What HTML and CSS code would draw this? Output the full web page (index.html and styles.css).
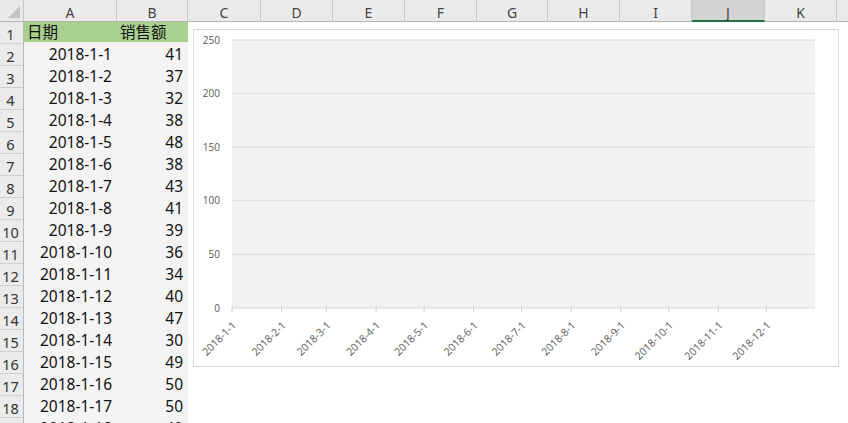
FILE: index.html
```html
<!DOCTYPE html>
<html lang="zh-CN">
<head>
    <meta charset="UTF-8">
    <title>销售额 - Sheet1</title>
    <link rel="stylesheet" href="styles.css">
</head>
<body>
    <div class="page">
        <div class="sheet" id="sheet">
            <div class="corner"><span class="corner-mark"></span></div>
            <div class="col-head">A</div>
            <div class="col-head">B</div>
            <div class="col-head">C</div>
            <div class="col-head">D</div>
            <div class="col-head">E</div>
            <div class="col-head">F</div>
            <div class="col-head">G</div>
            <div class="col-head">H</div>
            <div class="col-head">I</div>
            <div class="col-head active">J</div>
            <div class="col-head">K</div>
            <div class="col-head"></div>

            <div class="row-head">1</div>
            <div class="cell title">日期</div>
            <div class="cell title">销售额</div>
            <div class="cell rest"></div>
        </div>

        <!-- floating chart object -->
        <div class="chart">
            <svg id="chartSvg" width="646" height="338" viewBox="0 0 646 338"></svg>
        </div>
    </div>

    <script>
        const sales = [41, 37, 32, 38, 48, 38, 43, 41, 39, 36, 34, 40, 47, 30, 49, 50, 50, 40];
        const sheet = document.getElementById('sheet');

        sales.forEach((val, i) => {
            sheet.insertAdjacentHTML('beforeend', `
                <div class="row-head">${i + 2}</div>
                <div class="cell date">2018-1-${i + 1}</div>
                <div class="cell num">${val}</div>
                <div class="cell rest"></div>
            `);
        });

        // chart: plot area inside the chart box
        const svg = document.getElementById('chartSvg');
        const plot = { x: 39, y: 11, w: 583, h: 268 };
        let out = `<rect class="plot-bg" x="${plot.x}" y="${plot.y}" width="${plot.w}" height="${plot.h}"/>`;

        [250, 200, 150, 100, 50, 0].forEach(v => {
            const y = plot.y + plot.h - v / 250 * plot.h;
            out += `<line class="grid" x1="${plot.x}" x2="${plot.x + plot.w}" y1="${y}" y2="${y}"/>`;
            out += `<text class="y-label" x="27" y="${y + 3.5}">${v}</text>`;
        });

        const monthStart = [0, 31, 59, 90, 120, 151, 181, 212, 243, 273, 304, 334];
        const axisY = plot.y + plot.h;
        monthStart.forEach((d, m) => {
            const x = plot.x + d * 1.6;
            out += `<line class="tick" x1="${x}" x2="${x}" y1="${axisY - 2}" y2="${axisY + 4}"/>`;
            out += `<text class="x-label" transform="translate(${x + 5} ${axisY + 18}) rotate(-45)">2018-${m + 1}-1</text>`;
        });

        svg.innerHTML = out;
    </script>
</body>
</html>
```

FILE: styles.css
```css
* {
    margin: 0;
    padding: 0;
    box-sizing: border-box;
}

body {
    font-family: 'Noto Sans', 'Noto Sans CJK SC', sans-serif;
    background: #ffffff;
    overflow: hidden;
}

.page {
    position: relative;
    width: 848px;
    height: 423px;
    overflow: hidden;
}

/* Sheet grid */
.sheet {
    display: grid;
    grid-template-columns: 24px 93px 71px 73px 72px 72px 72px 71px 72px 72px 73px 72px 40px;
    grid-auto-rows: 22px;
}

.corner {
    position: relative;
    background: #e9e9e9;
    border-right: 1px solid #c6c6c6;
    border-bottom: 1px solid #b5b5b5;
}

.corner-mark {
    position: absolute;
    right: 3px;
    bottom: 3px;
    width: 0;
    height: 0;
    border-left: 12px solid transparent;
    border-bottom: 12px solid #c4c4c4;
}

.col-head {
    background: #ebebeb;
    border-right: 1px solid #c9c9c9;
    border-bottom: 1px solid #b5b5b5;
    color: #444;
    font-size: 14px;
    line-height: 22px;
    padding-top: 2px;
    text-align: center;
}

.col-head.active {
    background: #d4d4d4;
    border-bottom: 2px solid #217346;
}

.row-head {
    background: #ebebeb;
    border-right: 1px solid #b9b9b9;
    border-bottom: 1px solid #cfcfcf;
    color: #333;
    font-size: 14.5px;
    line-height: 22px;
    padding-top: 1px;
    text-align: center;
    padding-right: 2px;
}

.cell {
    font-size: 15.5px;
    line-height: 21px;
    color: #111;
    background: #f4f4f4;
    white-space: nowrap;
}

.cell.title {
    background: #a9d08e;
    padding-left: 3px;
    border-bottom: 2px solid #f4f4f4;
}

.cell.date,
.cell.num {
    text-align: right;
    padding-right: 5px;
}

.cell.rest {
    grid-column: 4 / -1;
    background: #ffffff;
}

/* Chart object */
.chart {
    position: absolute;
    left: 193px;
    top: 29px;
    width: 646px;
    height: 338px;
    background: #ffffff;
    border: 1px solid #d9d9d9;
}

.chart svg {
    display: block;
    margin: -1px 0 0 -1px;
}

.plot-bg {
    fill: #f2f2f2;
}

.grid {
    stroke: #d9d9d9;
    stroke-width: 1;
}

.tick {
    stroke: #d0d0d0;
    stroke-width: 1;
}

.y-label,
.x-label {
    font-family: 'Open Sans', 'Liberation Sans', sans-serif;
    font-size: 10px;
    fill: #595959;
}

.x-label {
    font-size: 10.5px;
}

.y-label {
    text-anchor: end;
}

.x-label {
    text-anchor: end;
}
```
